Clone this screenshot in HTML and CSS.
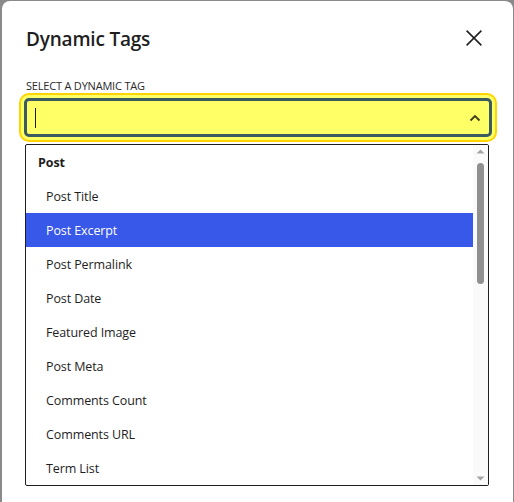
FILE: index.html
```html
<!DOCTYPE html>
<html>
<head>
<meta charset="utf-8">
<link rel="stylesheet" href="styles.css">
</head>
<body>
<div class="modal">
  <div class="header">
    <h1 class="title">Dynamic Tags</h1>
    <button class="close" aria-label="Close">
      <svg width="16" height="16" viewBox="0 0 16 16"><path d="M0.6 0.6L15.4 15.4M15.4 0.6L0.6 15.4" stroke="#1e1e1e" stroke-width="1.5" fill="none"/></svg>
    </button>
  </div>
  <div class="field">
    <div class="label">SELECT A DYNAMIC TAG</div>
    <div class="select">
      <span class="caret"></span>
      <svg class="chev" width="12" height="8" viewBox="0 0 12 8"><path d="M1.5 6.5L6 2L10.5 6.5" stroke="#3d3d1f" stroke-width="1.8" fill="none"/></svg>
    </div>
    <div class="list">
      <div class="items">
        <div class="row group">Post</div>
        <div class="row">Post Title</div>
        <div class="row active">Post Excerpt</div>
        <div class="row">Post Permalink</div>
        <div class="row">Post Date</div>
        <div class="row">Featured Image</div>
        <div class="row">Post Meta</div>
        <div class="row">Comments Count</div>
        <div class="row">Comments URL</div>
        <div class="row">Term List</div>
      </div>
      <div class="scrollbar">
        <svg class="arrow" width="15" height="12" viewBox="0 0 15 12"><path d="M3.5 8.5L7.5 4.5L11.5 8.5Z" fill="#a3a3a3"/></svg>
        <div class="track"><div class="thumb"></div></div>
        <svg class="arrow" width="15" height="12" viewBox="0 0 15 12"><path d="M3.5 3.5L7.5 7.5L11.5 3.5Z" fill="#a3a3a3"/></svg>
      </div>
    </div>
  </div>
</div>
</body>
</html>
```

FILE: styles.css
```css
* { box-sizing: border-box; }
html, body { margin: 0; padding: 0; }
body {
  background: #8a8a8a;
  font-family: "Open Sans", "Noto Sans", sans-serif;
  color: #1e1e1e;
  height: 502px;
  overflow: hidden;
}
.modal {
  margin: 1px 1px 0 2px;
  height: 520px;
  background: #fff;
  border-radius: 8px 8px 0 0;
}
.header {
  display: flex;
  justify-content: space-between;
  align-items: flex-start;
  padding: 24px 31px 0 24px;
  height: 79px;
}
.title {
  margin: 0;
  font-size: 19px;
  font-weight: 600;
  line-height: 28px;
  letter-spacing: -0.2px;
}
.close {
  border: 0;
  background: none;
  padding: 0;
  margin-top: 5px;
  width: 16px;
  height: 16px;
  display: block;
}
.close svg { display: block; }
.field {
  padding: 0 0 0 22px;
}
.label {
  font-size: 11px;
  line-height: 14px;
  color: #2a2a2a;
  margin-top: -1px;
  padding-left: 2px;
  letter-spacing: -0.2px;
}
.select {
  margin-top: 5px;
  width: 468px;
  height: 39px;
  border: 3px solid #3b5b60;
  border-radius: 5px;
  background: #ffff66;
  box-shadow: 0 0 0 3px #ffff66, 0 0 0 5px #ffd400;
  display: flex;
  align-items: center;
  justify-content: space-between;
  padding: 0 8px 0 8px;
}
.caret {
  display: block;
  width: 1px;
  height: 20px;
  background: #1e1e1e;
}
.chev { display: block; margin-top: 1px; }
.list {
  margin-top: 7px;
  margin-left: 1px;
  width: 464px;
  height: 342px;
  border: 1px solid #1e1e1e;
  border-radius: 2px;
  display: flex;
  overflow: hidden;
}
.items {
  width: 447px;
}
.row {
  height: 34px;
  display: flex;
  align-items: center;
  padding-left: 20px;
  font-size: 12.5px;
  color: #1e1e1e;
  letter-spacing: -0.1px;
}
.row.group {
  padding-left: 12px;
  font-weight: 700;
}
.row.active {
  background: #3858e9;
  color: #fff;
}
.scrollbar {
  width: 15px;
  background: #fafafa;
  display: flex;
  flex-direction: column;
}
.arrow { display: block; }
.track {
  flex: 1;
  padding: 0 4px;
}
.thumb {
  width: 7px;
  height: 121px;
  margin-top: 6px;
  background: #8f8f8f;
  border-radius: 4px;
}
```
